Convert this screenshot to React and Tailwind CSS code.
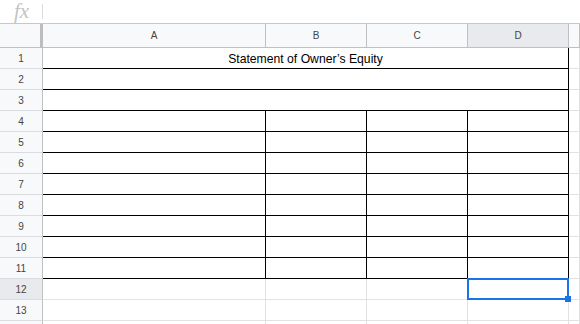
import React from "react";

const ROWS = Array.from({ length: 14 }, (_, i) => i + 1);

function RowHeader({ n }) {
  const sel = n === 12;
  return (
    <div
      className={`flex items-center justify-center border-r border-b border-r-[#c0c0c0] border-b-[#dadce0] text-[10px] text-[#444] ${
        sel ? "bg-[#e8eaed]" : "bg-[#f8f9fa]"
      }`}
    >
      {n <= 13 ? n : ""}
    </div>
  );
}

function Cell({ black, children, className = "" }) {
  return (
    <div
      className={`relative border-r border-b ${
        black ? "border-black" : "border-[#e2e2e2]"
      } ${className}`}
    >
      {children}
    </div>
  );
}

export default function App() {
  return (
    <div
      className="w-[580px] h-[324px] overflow-hidden bg-white"
      style={{ fontFamily: "'Liberation Sans', Arial, sans-serif" }}
    >
      {/* formula bar */}
      <div className="h-[24px] flex items-center border-b border-[#c8c8c8]">
        <div className="w-[42px] h-full flex items-center justify-center">
          <span
            className="italic text-[21px] text-[#c4c4c4] leading-none pl-[1px]"
            style={{ fontFamily: "'Liberation Serif', 'DejaVu Serif', serif" }}
          >
            fx
          </span>
        </div>
        <div className="w-px h-[15px] bg-[#dadce0]" />
      </div>

      {/* grid */}
      <div className="grid grid-cols-[43px_223px_101px_101px_101px_1fr] grid-rows-[24px_repeat(14,21px)] h-[300px]">
        {/* header row */}
        <div className="bg-[#f8f9fa] border-r-[3px] border-b border-r-[#bdbdbd] border-b-[#c0c0c0]" />
        {["A", "B", "C", "D", ""].map((l) => (
          <div
            key={l || "E"}
            className={`flex items-center justify-center border-b border-r border-[#c0c0c0] text-[10px] text-[#444] ${
              l === "D" ? "bg-[#e8eaed]" : "bg-[#f8f9fa]"
            }`}
          >
            {l}
          </div>
        ))}

        {ROWS.map((n) => {
          if (n <= 3) {
            return (
              <React.Fragment key={n}>
                <RowHeader n={n} />
                <Cell black className="col-span-4 flex items-end justify-center">
                  {n === 1 && (
                    <span className="text-[12.2px] leading-none pb-[3px] text-black">
                      Statement of Owner’s Equity
                    </span>
                  )}
                </Cell>
                <Cell />
              </React.Fragment>
            );
          }
          const black = n <= 11;
          return (
            <React.Fragment key={n}>
              <RowHeader n={n} />
              <Cell black={black} />
              <Cell black={black} />
              <Cell black={black} />
              <Cell black={black}>
                {n === 12 && (
                  <>
                    <div className="absolute -left-px -top-px w-[102px] h-[22px] border-2 border-[#1a73e8] z-10" />
                    <div className="absolute left-[97px] top-[17px] w-[6px] h-[6px] bg-[#1a73e8] z-20" />
                  </>
                )}
              </Cell>
              <Cell />
            </React.Fragment>
          );
        })}
      </div>
    </div>
  );
}
